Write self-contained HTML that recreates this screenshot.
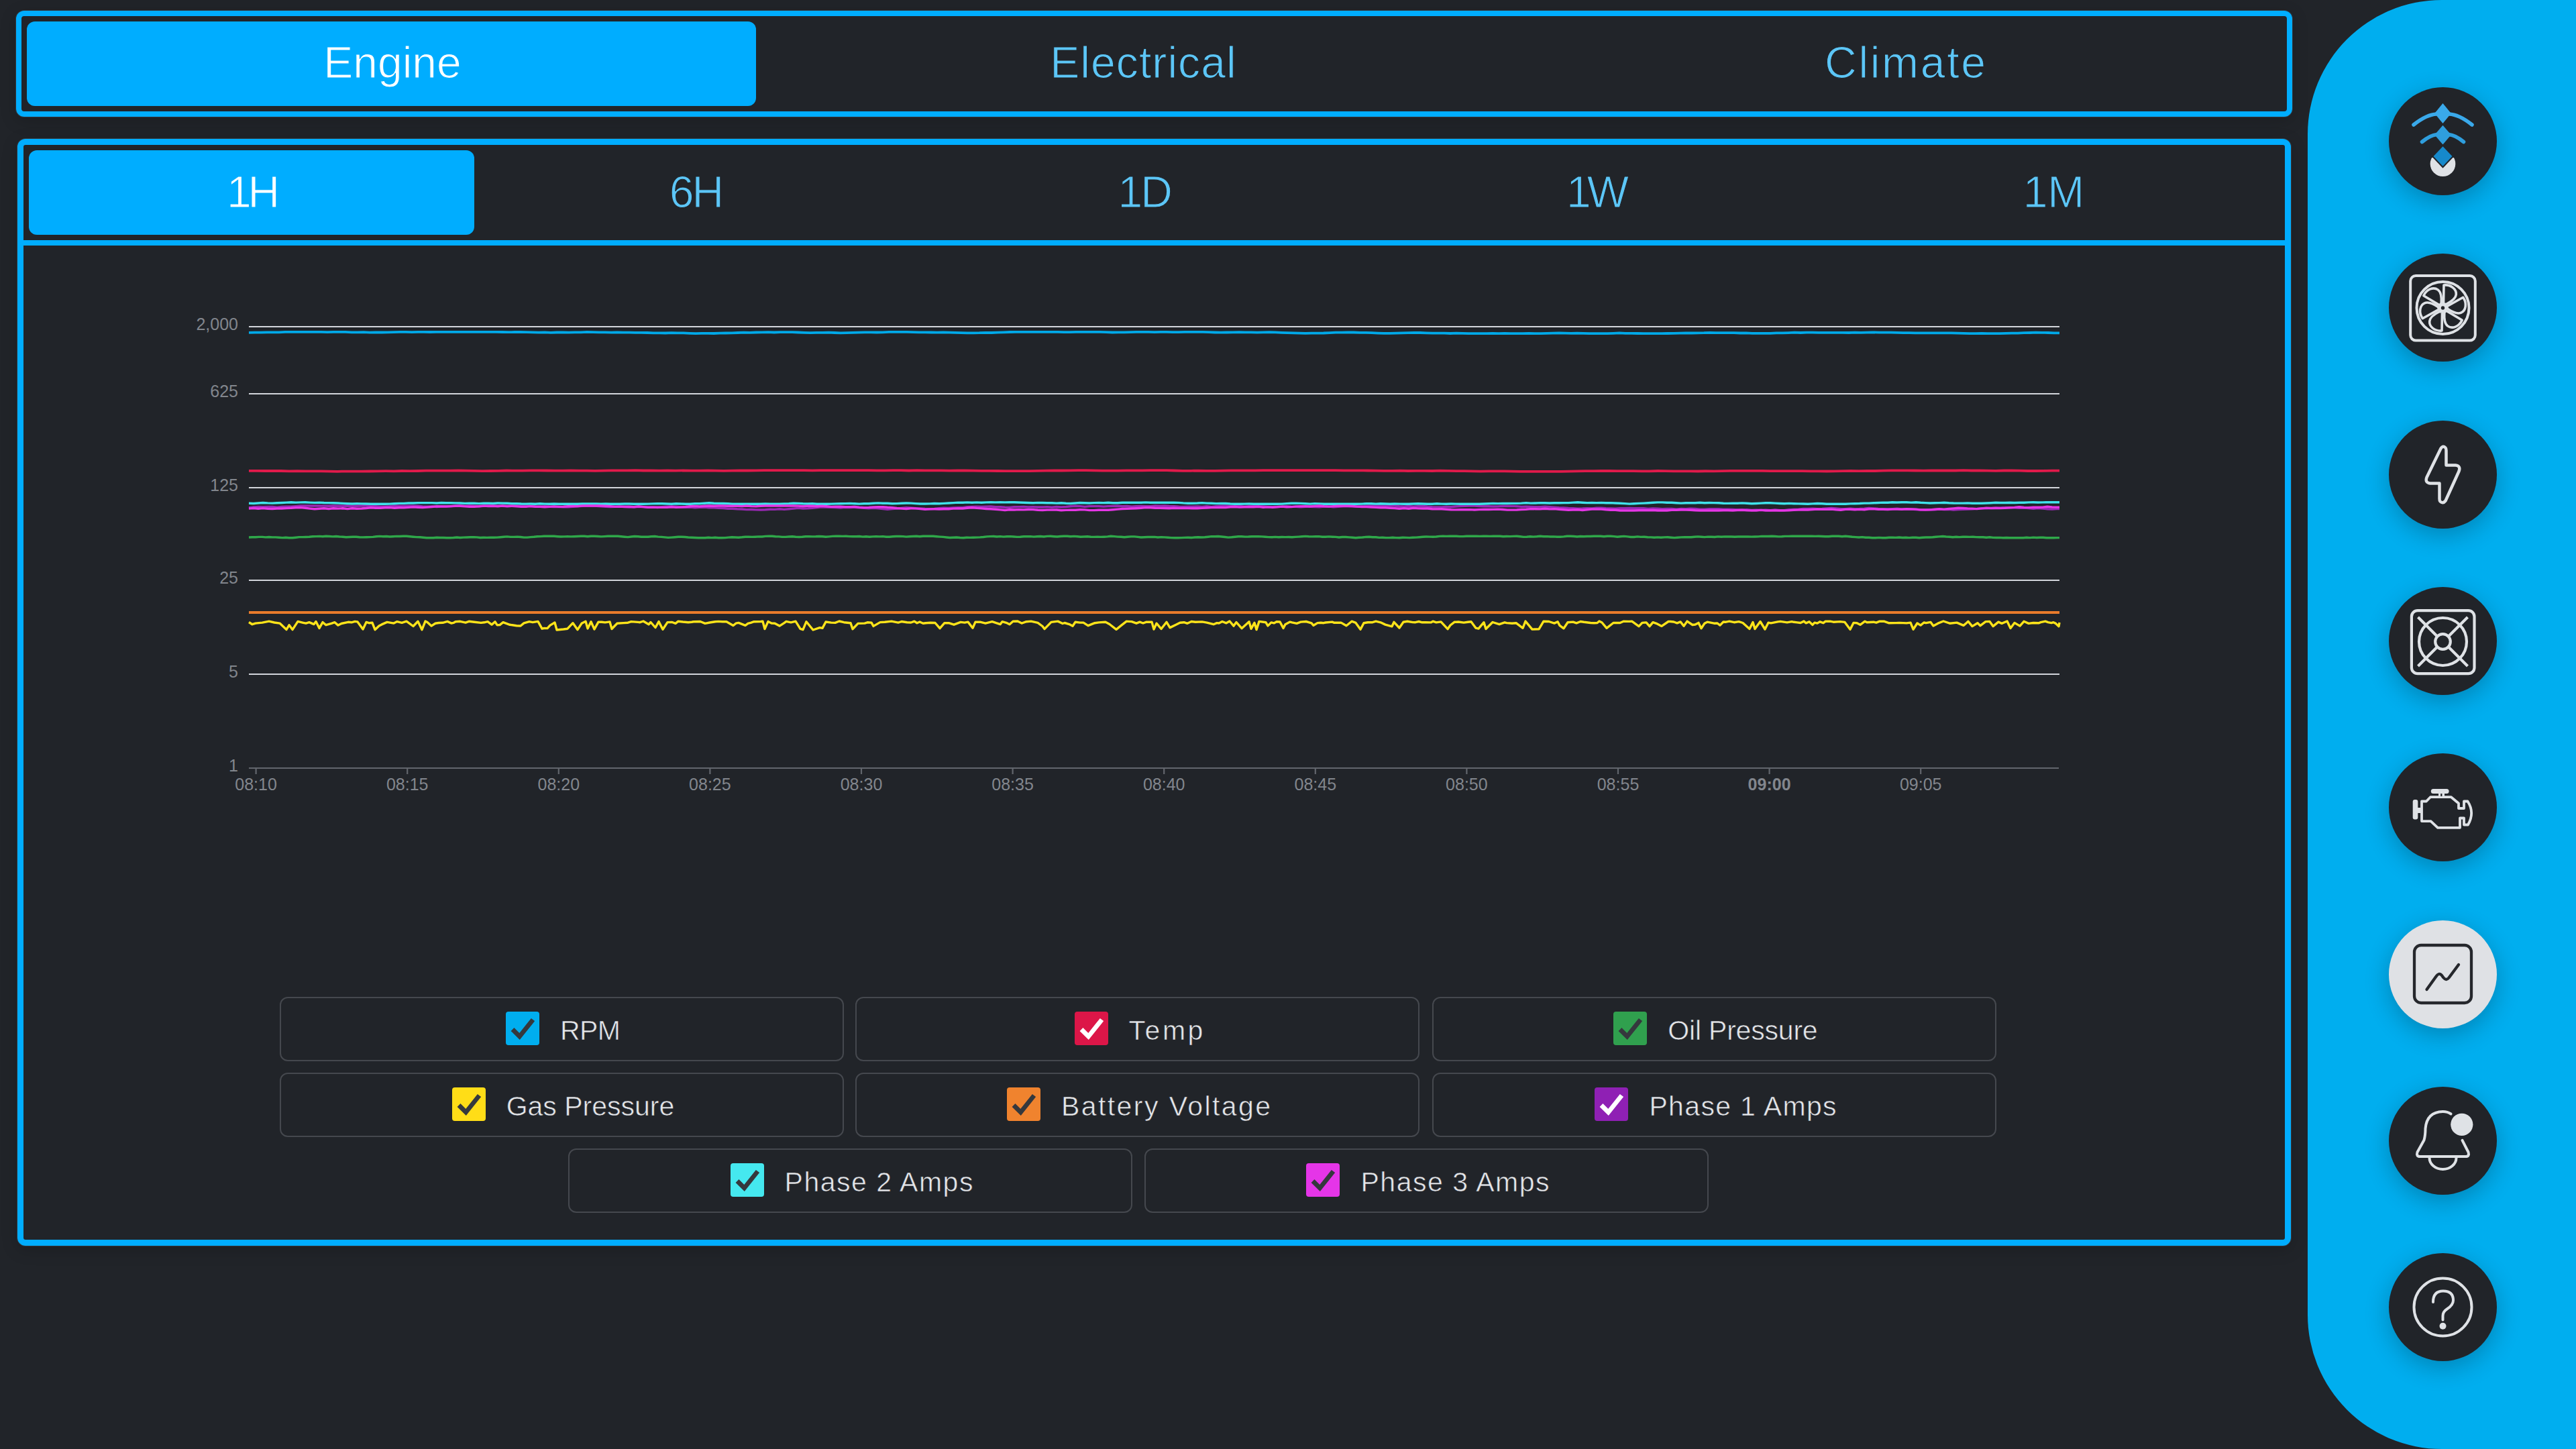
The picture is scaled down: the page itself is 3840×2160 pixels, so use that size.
<!DOCTYPE html>
<html><head><meta charset="utf-8">
<style>
html,body{margin:0;padding:0;}
body{width:3840px;height:2160px;background:#212429;position:relative;overflow:hidden;font-family:"Liberation Sans",sans-serif;}
.box{position:absolute;box-sizing:border-box;border:8px solid #00ADFF;border-radius:12px;box-shadow:0 0 0 1px rgba(70,72,78,0.55),0 6px 24px rgba(0,0,0,0.18);}
.btn{position:absolute;background:#00ADFF;border-radius:12px;}
.tt{position:absolute;font-size:66px;line-height:66px;color:#5CC6F7;-webkit-text-stroke:1.1px #212429;white-space:nowrap;text-align:center;width:600px;}
.tt.on{color:#FFFFFF;-webkit-text-stroke:1.1px #00ADFF;}
.yl{position:absolute;right:3485px;font-size:25px;line-height:30px;color:#82868D;white-space:nowrap;text-align:right;}
.xl{position:absolute;top:1154px;width:120px;text-align:center;font-size:25px;line-height:30px;color:#82868D;}
.lg{position:absolute;box-sizing:border-box;width:841px;height:96px;border:2px solid #45484E;border-radius:12px;display:flex;align-items:center;justify-content:center;padding-left:4px;}
.cb{display:inline-block;width:50px;height:50px;border-radius:4px;margin-right:31px;position:relative;top:-1.5px;}
.cb svg{position:absolute;left:0;top:0;}
.lt{position:relative;top:2px;font-size:41px;line-height:41px;color:#E4E6E9;-webkit-text-stroke:0.6px #212429;white-space:nowrap;}
.side{position:absolute;left:3440px;top:0;width:400px;height:2160px;background:#00AEEF;border-radius:200px 0 0 200px;}
.cir{position:absolute;left:121.3px;width:161px;height:161px;border-radius:50%;box-shadow:0 10px 36px rgba(0,0,0,0.24);}
.cir svg{position:absolute;left:0;top:0;}
</style></head><body>
<div class="box" style="left:24px;top:16px;width:3393px;height:158px;"></div>
<div class="btn" style="left:40px;top:32px;width:1087px;height:126px;"></div>
<div class="tt on" style="left:285px;top:60px">Engine</div>
<div class="tt" style="left:1404.5px;top:60px;letter-spacing:1.07px">Electrical</div>
<div class="tt" style="left:2541.35px;top:60px;letter-spacing:2.7px">Climate</div>

<div class="box" style="left:26px;top:207px;width:3389px;height:1650px;border-width:9px;"></div>
<div class="btn" style="left:43px;top:224px;width:664px;height:126px;"></div>
<div style="position:absolute;left:35px;top:358px;width:3371px;height:8px;background:#00ADFF"></div>
<div class="tt on" style="left:75.10000000000002px;top:252.5px;letter-spacing:-5px">1H</div>
<div class="tt" style="left:736.9000000000001px;top:252.5px;letter-spacing:-3px">6H</div>
<div class="tt" style="left:1405.8px;top:252.5px;letter-spacing:-3px">1D</div>
<div class="tt" style="left:2078.5px;top:252.5px;letter-spacing:-6px">1W</div>
<div class="tt" style="left:2761.5px;top:252.5px">1M</div>

<svg style="position:absolute;left:0;top:0" width="3400" height="1200" viewBox="0 0 3400 1200">
<line x1="371" y1="487" x2="3070" y2="487" stroke="#D2D5DB" stroke-width="2.2"/>
<line x1="371" y1="587" x2="3070" y2="587" stroke="#D2D5DB" stroke-width="2.2"/>
<line x1="371" y1="727" x2="3070" y2="727" stroke="#D2D5DB" stroke-width="2.2"/>
<line x1="371" y1="865" x2="3070" y2="865" stroke="#D2D5DB" stroke-width="2.2"/>
<line x1="371" y1="1005" x2="3070" y2="1005" stroke="#D2D5DB" stroke-width="2.2"/>
<line x1="371" y1="1145" x2="3069" y2="1145" stroke="#62666D" stroke-width="2.2"/>
<line x1="381.6" y1="1145" x2="381.6" y2="1154" stroke="#62666D" stroke-width="2.2"/>
<line x1="607.2" y1="1145" x2="607.2" y2="1154" stroke="#62666D" stroke-width="2.2"/>
<line x1="832.8" y1="1145" x2="832.8" y2="1154" stroke="#62666D" stroke-width="2.2"/>
<line x1="1058.4" y1="1145" x2="1058.4" y2="1154" stroke="#62666D" stroke-width="2.2"/>
<line x1="1284.0" y1="1145" x2="1284.0" y2="1154" stroke="#62666D" stroke-width="2.2"/>
<line x1="1509.6" y1="1145" x2="1509.6" y2="1154" stroke="#62666D" stroke-width="2.2"/>
<line x1="1735.2" y1="1145" x2="1735.2" y2="1154" stroke="#62666D" stroke-width="2.2"/>
<line x1="1960.8" y1="1145" x2="1960.8" y2="1154" stroke="#62666D" stroke-width="2.2"/>
<line x1="2186.4" y1="1145" x2="2186.4" y2="1154" stroke="#62666D" stroke-width="2.2"/>
<line x1="2412.0" y1="1145" x2="2412.0" y2="1154" stroke="#62666D" stroke-width="2.2"/>
<line x1="2637.6" y1="1145" x2="2637.6" y2="1154" stroke="#62666D" stroke-width="2.2"/>
<line x1="2863.2" y1="1145" x2="2863.2" y2="1154" stroke="#62666D" stroke-width="2.2"/>
<path d="M371.0,495.9 L380.0,495.6 L389.0,495.7 L398.0,495.4 L407.0,495.4 L416.0,495.3 L425.0,494.9 L434.0,494.9 L443.0,494.8 L452.0,494.8 L461.0,494.8 L470.0,494.8 L479.0,494.8 L488.0,495.1 L497.0,494.8 L506.0,494.8 L515.0,494.9 L524.0,495.3 L533.0,495.3 L542.0,495.2 L551.0,495.6 L560.0,495.3 L569.0,495.5 L578.0,495.4 L587.0,495.1 L596.0,494.8 L605.0,494.8 L614.0,495.1 L623.0,494.8 L632.0,494.9 L641.0,495.0 L650.0,494.9 L659.0,494.9 L668.0,494.8 L677.0,494.8 L686.0,494.8 L695.0,494.9 L704.0,494.9 L713.0,494.8 L722.0,494.9 L731.0,494.8 L740.0,494.8 L749.0,495.0 L758.0,495.2 L767.0,495.0 L776.0,495.0 L785.0,495.1 L794.0,495.4 L803.0,495.6 L812.0,495.4 L821.0,495.8 L830.0,495.5 L839.0,495.4 L848.0,495.6 L857.0,495.3 L866.0,495.3 L875.0,494.9 L884.0,495.1 L893.0,495.3 L902.0,495.4 L911.0,495.7 L920.0,495.5 L929.0,495.7 L938.0,495.7 L947.0,495.8 L956.0,495.8 L965.0,496.0 L974.0,496.4 L983.0,496.4 L992.0,496.5 L1001.0,496.2 L1010.0,496.3 L1019.0,496.4 L1028.0,496.8 L1037.0,497.1 L1046.0,496.9 L1055.0,496.8 L1064.0,497.0 L1073.0,496.6 L1082.0,496.5 L1091.0,496.3 L1100.0,496.0 L1109.0,495.6 L1118.0,495.8 L1127.0,495.5 L1136.0,495.3 L1145.0,495.2 L1154.0,495.5 L1163.0,495.2 L1172.0,495.2 L1181.0,495.2 L1190.0,495.5 L1199.0,495.8 L1208.0,496.1 L1217.0,495.9 L1226.0,495.8 L1235.0,495.7 L1244.0,496.0 L1253.0,496.4 L1262.0,496.1 L1271.0,495.8 L1280.0,495.6 L1289.0,495.4 L1298.0,495.4 L1307.0,495.5 L1316.0,495.3 L1325.0,494.9 L1334.0,494.8 L1343.0,494.8 L1352.0,494.9 L1361.0,495.2 L1370.0,495.4 L1379.0,495.4 L1388.0,495.5 L1397.0,495.6 L1406.0,495.3 L1415.0,495.6 L1424.0,495.8 L1433.0,496.1 L1442.0,496.3 L1451.0,496.3 L1460.0,496.2 L1469.0,495.9 L1478.0,496.0 L1487.0,495.6 L1496.0,495.3 L1505.0,495.0 L1514.0,494.8 L1523.0,494.8 L1532.0,494.8 L1541.0,494.8 L1550.0,494.8 L1559.0,494.8 L1568.0,494.8 L1577.0,494.8 L1586.0,495.1 L1595.0,495.2 L1604.0,494.9 L1613.0,494.8 L1622.0,494.8 L1631.0,494.8 L1640.0,494.8 L1649.0,495.1 L1658.0,495.5 L1667.0,495.4 L1676.0,495.4 L1685.0,495.1 L1694.0,494.8 L1703.0,494.8 L1712.0,494.8 L1721.0,495.1 L1730.0,494.8 L1739.0,494.8 L1748.0,495.2 L1757.0,495.2 L1766.0,494.9 L1775.0,494.9 L1784.0,494.8 L1793.0,494.8 L1802.0,495.2 L1811.0,495.5 L1820.0,495.7 L1829.0,495.5 L1838.0,495.4 L1847.0,495.1 L1856.0,495.3 L1865.0,495.3 L1874.0,495.6 L1883.0,495.4 L1892.0,495.2 L1901.0,495.4 L1910.0,495.8 L1919.0,496.1 L1928.0,496.4 L1937.0,496.6 L1946.0,496.8 L1955.0,496.6 L1964.0,496.6 L1973.0,496.5 L1982.0,496.1 L1991.0,495.7 L2000.0,495.6 L2009.0,495.4 L2018.0,495.5 L2027.0,495.9 L2036.0,495.8 L2045.0,496.2 L2054.0,496.6 L2063.0,496.9 L2072.0,496.8 L2081.0,496.6 L2090.0,496.4 L2099.0,496.2 L2108.0,495.9 L2117.0,496.0 L2126.0,496.3 L2135.0,496.6 L2144.0,496.6 L2153.0,496.7 L2162.0,497.0 L2171.0,496.6 L2180.0,496.8 L2189.0,497.1 L2198.0,497.2 L2207.0,497.2 L2216.0,497.2 L2225.0,496.9 L2234.0,497.2 L2243.0,497.0 L2252.0,497.2 L2261.0,497.2 L2270.0,497.1 L2279.0,497.0 L2288.0,497.2 L2297.0,497.2 L2306.0,496.9 L2315.0,496.6 L2324.0,496.4 L2333.0,496.7 L2342.0,496.9 L2351.0,496.6 L2360.0,496.9 L2369.0,497.2 L2378.0,497.2 L2387.0,497.1 L2396.0,497.1 L2405.0,496.8 L2414.0,496.4 L2423.0,496.8 L2432.0,496.9 L2441.0,497.0 L2450.0,497.2 L2459.0,497.1 L2468.0,497.2 L2477.0,497.2 L2486.0,497.0 L2495.0,496.8 L2504.0,496.6 L2513.0,496.4 L2522.0,496.5 L2531.0,496.3 L2540.0,496.2 L2549.0,495.9 L2558.0,496.2 L2567.0,496.1 L2576.0,496.1 L2585.0,496.2 L2594.0,496.5 L2603.0,496.4 L2612.0,496.8 L2621.0,496.8 L2630.0,496.8 L2639.0,496.8 L2648.0,496.4 L2657.0,496.4 L2666.0,496.1 L2675.0,495.7 L2684.0,496.0 L2693.0,495.7 L2702.0,495.7 L2711.0,495.9 L2720.0,495.9 L2729.0,495.8 L2738.0,495.8 L2747.0,495.8 L2756.0,496.0 L2765.0,495.7 L2774.0,495.8 L2783.0,495.6 L2792.0,495.4 L2801.0,495.6 L2810.0,495.6 L2819.0,495.7 L2828.0,495.9 L2837.0,496.2 L2846.0,496.2 L2855.0,496.3 L2864.0,496.3 L2873.0,496.3 L2882.0,496.4 L2891.0,496.4 L2900.0,496.4 L2909.0,496.4 L2918.0,496.7 L2927.0,496.9 L2936.0,497.2 L2945.0,497.2 L2954.0,497.0 L2963.0,497.1 L2972.0,497.2 L2981.0,497.2 L2990.0,496.9 L2999.0,496.6 L3008.0,496.6 L3017.0,496.2 L3026.0,496.0 L3035.0,495.7 L3044.0,495.8 L3053.0,496.0 L3062.0,496.4 L3070.0,496.4" fill="none" stroke="#00A9E8" stroke-width="3.8" stroke-linejoin="round" stroke-linecap="butt"/>
<path d="M371.0,701.8 L383.0,701.9 L395.0,702.0 L407.0,701.8 L419.0,702.0 L431.0,702.3 L443.0,702.1 L455.0,702.4 L467.0,702.4 L479.0,702.3 L491.0,702.6 L503.0,702.8 L515.0,702.6 L527.0,702.6 L539.0,702.6 L551.0,702.5 L563.0,702.3 L575.0,702.2 L587.0,702.3 L599.0,702.0 L611.0,702.1 L623.0,702.0 L635.0,701.7 L647.0,701.6 L659.0,701.7 L671.0,701.7 L683.0,701.4 L695.0,701.7 L707.0,701.9 L719.0,702.2 L731.0,702.0 L743.0,701.8 L755.0,701.5 L767.0,701.7 L779.0,701.6 L791.0,701.3 L803.0,701.3 L815.0,701.5 L827.0,701.7 L839.0,701.6 L851.0,701.4 L863.0,701.6 L875.0,701.7 L887.0,701.8 L899.0,701.6 L911.0,701.3 L923.0,701.4 L935.0,701.4 L947.0,701.2 L959.0,701.5 L971.0,701.5 L983.0,701.7 L995.0,701.5 L1007.0,701.7 L1019.0,701.4 L1031.0,701.6 L1043.0,701.6 L1055.0,701.5 L1067.0,701.6 L1079.0,701.8 L1091.0,701.7 L1103.0,701.4 L1115.0,701.5 L1127.0,701.3 L1139.0,701.2 L1151.0,701.2 L1163.0,701.2 L1175.0,701.2 L1187.0,701.2 L1199.0,701.2 L1211.0,701.4 L1223.0,701.2 L1235.0,701.2 L1247.0,701.2 L1259.0,701.2 L1271.0,701.2 L1283.0,701.2 L1295.0,701.2 L1307.0,701.3 L1319.0,701.4 L1331.0,701.2 L1343.0,701.2 L1355.0,701.5 L1367.0,701.2 L1379.0,701.4 L1391.0,701.4 L1403.0,701.4 L1415.0,701.6 L1427.0,701.5 L1439.0,701.5 L1451.0,701.6 L1463.0,701.9 L1475.0,701.8 L1487.0,702.0 L1499.0,702.1 L1511.0,702.2 L1523.0,702.2 L1535.0,702.1 L1547.0,701.8 L1559.0,701.6 L1571.0,701.3 L1583.0,701.5 L1595.0,701.3 L1607.0,701.2 L1619.0,701.2 L1631.0,701.4 L1643.0,701.6 L1655.0,701.7 L1667.0,701.6 L1679.0,701.4 L1691.0,701.3 L1703.0,701.3 L1715.0,701.2 L1727.0,701.2 L1739.0,701.2 L1751.0,701.5 L1763.0,701.8 L1775.0,701.8 L1787.0,701.6 L1799.0,701.9 L1811.0,701.8 L1823.0,701.7 L1835.0,701.4 L1847.0,701.3 L1859.0,701.3 L1871.0,701.3 L1883.0,701.2 L1895.0,701.2 L1907.0,701.2 L1919.0,701.2 L1931.0,701.2 L1943.0,701.2 L1955.0,701.2 L1967.0,701.2 L1979.0,701.2 L1991.0,701.2 L2003.0,701.3 L2015.0,701.3 L2027.0,701.4 L2039.0,701.5 L2051.0,701.6 L2063.0,701.9 L2075.0,701.8 L2087.0,701.7 L2099.0,702.0 L2111.0,701.8 L2123.0,701.9 L2135.0,702.0 L2147.0,701.7 L2159.0,701.9 L2171.0,702.2 L2183.0,702.2 L2195.0,702.4 L2207.0,702.6 L2219.0,702.4 L2231.0,702.4 L2243.0,702.4 L2255.0,702.6 L2267.0,702.8 L2279.0,702.8 L2291.0,702.8 L2303.0,702.8 L2315.0,702.8 L2327.0,702.8 L2339.0,702.6 L2351.0,702.4 L2363.0,702.1 L2375.0,702.1 L2387.0,701.8 L2399.0,702.0 L2411.0,702.1 L2423.0,702.1 L2435.0,702.2 L2447.0,702.3 L2459.0,702.3 L2471.0,702.0 L2483.0,702.2 L2495.0,702.3 L2507.0,702.3 L2519.0,702.4 L2531.0,702.5 L2543.0,702.2 L2555.0,702.3 L2567.0,702.2 L2579.0,701.9 L2591.0,701.8 L2603.0,701.9 L2615.0,701.8 L2627.0,701.9 L2639.0,702.2 L2651.0,702.2 L2663.0,702.1 L2675.0,702.1 L2687.0,702.2 L2699.0,702.4 L2711.0,702.4 L2723.0,702.5 L2735.0,702.3 L2747.0,702.1 L2759.0,701.9 L2771.0,702.1 L2783.0,701.9 L2795.0,702.0 L2807.0,701.7 L2819.0,701.4 L2831.0,701.3 L2843.0,701.4 L2855.0,701.5 L2867.0,701.6 L2879.0,701.5 L2891.0,701.5 L2903.0,701.5 L2915.0,701.5 L2927.0,701.2 L2939.0,701.5 L2951.0,701.3 L2963.0,701.6 L2975.0,701.8 L2987.0,701.5 L2999.0,701.5 L3011.0,701.7 L3023.0,702.0 L3035.0,702.0 L3047.0,701.8 L3059.0,701.6 L3070.0,701.6" fill="none" stroke="#E11A4B" stroke-width="3.8" stroke-linejoin="round" stroke-linecap="butt"/>
<path d="M371.0,801.0 L376.0,800.7 L381.0,800.8 L386.0,800.4 L391.0,800.4 L396.0,800.9 L401.0,800.5 L406.0,800.9 L411.0,800.9 L416.0,801.3 L421.0,801.6 L426.0,801.3 L431.0,801.7 L436.0,801.7 L441.0,801.2 L446.0,800.6 L451.0,800.6 L456.0,800.5 L461.0,800.3 L466.0,799.8 L471.0,799.6 L476.0,799.4 L481.0,799.8 L486.0,799.2 L491.0,799.5 L496.0,799.9 L501.0,799.5 L506.0,800.0 L511.0,800.2 L516.0,800.7 L521.0,800.5 L526.0,800.3 L531.0,800.2 L536.0,800.8 L541.0,800.9 L546.0,800.7 L551.0,800.6 L556.0,800.4 L561.0,799.8 L566.0,799.4 L571.0,799.8 L576.0,799.5 L581.0,800.0 L586.0,799.7 L591.0,799.4 L596.0,799.5 L601.0,799.2 L606.0,799.2 L611.0,799.7 L616.0,800.2 L621.0,800.6 L626.0,800.7 L631.0,801.2 L636.0,801.8 L641.0,801.8 L646.0,801.8 L651.0,801.3 L656.0,801.5 L661.0,801.5 L666.0,801.8 L671.0,801.8 L676.0,801.5 L681.0,801.0 L686.0,801.5 L691.0,801.1 L696.0,801.0 L701.0,800.8 L706.0,800.6 L711.0,800.9 L716.0,801.5 L721.0,801.2 L726.0,801.4 L731.0,801.1 L736.0,801.2 L741.0,801.1 L746.0,800.7 L751.0,800.3 L756.0,799.9 L761.0,800.4 L766.0,800.4 L771.0,800.1 L776.0,800.5 L781.0,801.1 L786.0,801.1 L791.0,800.6 L796.0,800.3 L801.0,799.8 L806.0,799.6 L811.0,799.2 L816.0,799.2 L821.0,799.2 L826.0,799.3 L831.0,799.7 L836.0,800.0 L841.0,799.9 L846.0,799.8 L851.0,799.9 L856.0,799.7 L861.0,799.5 L866.0,799.2 L871.0,799.2 L876.0,799.8 L881.0,799.3 L886.0,799.3 L891.0,799.5 L896.0,799.9 L901.0,799.6 L906.0,799.3 L911.0,799.2 L916.0,799.2 L921.0,799.2 L926.0,799.7 L931.0,800.2 L936.0,800.6 L941.0,800.0 L946.0,799.5 L951.0,799.7 L956.0,800.2 L961.0,800.2 L966.0,800.3 L971.0,799.7 L976.0,799.5 L981.0,800.1 L986.0,800.4 L991.0,800.9 L996.0,801.4 L1001.0,801.1 L1006.0,800.7 L1011.0,800.3 L1016.0,800.3 L1021.0,800.5 L1026.0,801.0 L1031.0,801.3 L1036.0,801.5 L1041.0,801.8 L1046.0,801.7 L1051.0,801.8 L1056.0,801.2 L1061.0,801.6 L1066.0,801.3 L1071.0,801.8 L1076.0,801.8 L1081.0,801.6 L1086.0,801.1 L1091.0,800.8 L1096.0,801.0 L1101.0,801.2 L1106.0,800.8 L1111.0,800.2 L1116.0,800.3 L1121.0,800.4 L1126.0,800.2 L1131.0,799.9 L1136.0,800.0 L1141.0,799.4 L1146.0,799.2 L1151.0,799.2 L1156.0,799.8 L1161.0,799.9 L1166.0,800.4 L1171.0,800.4 L1176.0,800.0 L1181.0,799.7 L1186.0,800.3 L1191.0,800.5 L1196.0,800.3 L1201.0,799.7 L1206.0,799.7 L1211.0,799.9 L1216.0,799.8 L1221.0,799.5 L1226.0,799.7 L1231.0,800.3 L1236.0,799.9 L1241.0,799.4 L1246.0,799.2 L1251.0,799.2 L1256.0,799.4 L1261.0,799.2 L1266.0,799.6 L1271.0,799.8 L1276.0,799.8 L1281.0,799.5 L1286.0,800.1 L1291.0,799.8 L1296.0,800.2 L1301.0,799.9 L1306.0,799.6 L1311.0,799.9 L1316.0,799.6 L1321.0,800.2 L1326.0,800.2 L1331.0,799.8 L1336.0,799.5 L1341.0,799.4 L1346.0,799.6 L1351.0,800.1 L1356.0,799.7 L1361.0,799.5 L1366.0,799.2 L1371.0,799.8 L1376.0,799.3 L1381.0,799.2 L1386.0,799.2 L1391.0,799.2 L1396.0,799.7 L1401.0,800.1 L1406.0,800.4 L1411.0,801.0 L1416.0,801.5 L1421.0,801.3 L1426.0,801.0 L1431.0,801.5 L1436.0,801.8 L1441.0,801.2 L1446.0,801.4 L1451.0,801.3 L1456.0,801.1 L1461.0,800.9 L1466.0,800.5 L1471.0,799.9 L1476.0,799.6 L1481.0,799.5 L1486.0,800.0 L1491.0,799.6 L1496.0,800.1 L1501.0,799.8 L1506.0,799.6 L1511.0,800.0 L1516.0,800.4 L1521.0,800.3 L1526.0,799.7 L1531.0,799.7 L1536.0,799.6 L1541.0,800.1 L1546.0,799.7 L1551.0,799.5 L1556.0,800.0 L1561.0,799.4 L1566.0,799.3 L1571.0,799.7 L1576.0,800.0 L1581.0,799.5 L1586.0,799.2 L1591.0,799.2 L1596.0,799.7 L1601.0,799.4 L1606.0,799.7 L1611.0,800.2 L1616.0,800.0 L1621.0,799.7 L1626.0,800.3 L1631.0,800.4 L1636.0,800.1 L1641.0,800.4 L1646.0,800.2 L1651.0,799.9 L1656.0,799.3 L1661.0,799.6 L1666.0,800.1 L1671.0,800.3 L1676.0,800.8 L1681.0,800.2 L1686.0,799.9 L1691.0,799.9 L1696.0,800.4 L1701.0,801.0 L1706.0,800.8 L1711.0,800.5 L1716.0,800.5 L1721.0,800.4 L1726.0,801.0 L1731.0,800.6 L1736.0,800.9 L1741.0,801.2 L1746.0,801.6 L1751.0,801.8 L1756.0,801.8 L1761.0,801.6 L1766.0,801.4 L1771.0,801.2 L1776.0,801.5 L1781.0,801.0 L1786.0,800.7 L1791.0,801.0 L1796.0,800.7 L1801.0,800.2 L1806.0,799.6 L1811.0,799.7 L1816.0,799.5 L1821.0,800.0 L1826.0,800.5 L1831.0,801.1 L1836.0,800.8 L1841.0,800.3 L1846.0,799.8 L1851.0,799.8 L1856.0,800.1 L1861.0,800.0 L1866.0,799.7 L1871.0,799.6 L1876.0,799.7 L1881.0,799.9 L1886.0,800.2 L1891.0,800.6 L1896.0,800.8 L1901.0,800.4 L1906.0,800.8 L1911.0,800.5 L1916.0,800.6 L1921.0,800.5 L1926.0,800.8 L1931.0,800.4 L1936.0,800.1 L1941.0,799.8 L1946.0,799.4 L1951.0,799.8 L1956.0,799.9 L1961.0,799.7 L1966.0,799.6 L1971.0,800.2 L1976.0,800.2 L1981.0,799.9 L1986.0,800.2 L1991.0,800.4 L1996.0,801.0 L2001.0,800.5 L2006.0,800.5 L2011.0,800.9 L2016.0,801.3 L2021.0,801.8 L2026.0,801.2 L2031.0,801.0 L2036.0,800.5 L2041.0,800.2 L2046.0,800.7 L2051.0,800.8 L2056.0,801.4 L2061.0,801.2 L2066.0,801.6 L2071.0,801.6 L2076.0,801.3 L2081.0,801.6 L2086.0,801.8 L2091.0,801.3 L2096.0,801.4 L2101.0,801.6 L2106.0,801.2 L2111.0,801.1 L2116.0,800.7 L2121.0,800.3 L2126.0,800.0 L2131.0,800.1 L2136.0,800.3 L2141.0,800.0 L2146.0,799.4 L2151.0,799.2 L2156.0,799.4 L2161.0,799.2 L2166.0,799.2 L2171.0,799.2 L2176.0,799.6 L2181.0,799.6 L2186.0,799.2 L2191.0,799.2 L2196.0,799.2 L2201.0,799.3 L2206.0,799.4 L2211.0,799.2 L2216.0,799.2 L2221.0,799.4 L2226.0,799.3 L2231.0,799.2 L2236.0,799.2 L2241.0,799.7 L2246.0,799.5 L2251.0,799.6 L2256.0,799.4 L2261.0,799.3 L2266.0,799.8 L2271.0,800.4 L2276.0,800.2 L2281.0,799.8 L2286.0,800.1 L2291.0,799.8 L2296.0,799.2 L2301.0,799.7 L2306.0,799.6 L2311.0,800.0 L2316.0,799.9 L2321.0,800.3 L2326.0,800.3 L2331.0,799.9 L2336.0,799.3 L2341.0,799.3 L2346.0,799.5 L2351.0,800.0 L2356.0,799.5 L2361.0,799.7 L2366.0,799.5 L2371.0,799.5 L2376.0,799.2 L2381.0,799.2 L2386.0,799.2 L2391.0,799.7 L2396.0,799.3 L2401.0,799.3 L2406.0,799.6 L2411.0,800.2 L2416.0,799.8 L2421.0,799.4 L2426.0,799.9 L2431.0,800.5 L2436.0,800.5 L2441.0,799.9 L2446.0,800.4 L2451.0,800.3 L2456.0,800.8 L2461.0,800.9 L2466.0,801.3 L2471.0,800.9 L2476.0,801.2 L2481.0,800.9 L2486.0,800.8 L2491.0,801.2 L2496.0,801.6 L2501.0,801.2 L2506.0,800.9 L2511.0,800.8 L2516.0,800.8 L2521.0,800.7 L2526.0,800.2 L2531.0,799.9 L2536.0,800.2 L2541.0,800.6 L2546.0,800.1 L2551.0,800.2 L2556.0,800.5 L2561.0,799.9 L2566.0,800.3 L2571.0,799.9 L2576.0,800.0 L2581.0,800.0 L2586.0,800.2 L2591.0,800.0 L2596.0,799.9 L2601.0,800.0 L2606.0,799.9 L2611.0,800.1 L2616.0,800.0 L2621.0,799.9 L2626.0,799.4 L2631.0,799.5 L2636.0,799.5 L2641.0,799.2 L2646.0,799.5 L2651.0,799.9 L2656.0,799.8 L2661.0,799.4 L2666.0,799.4 L2671.0,799.2 L2676.0,799.2 L2681.0,799.2 L2686.0,799.2 L2691.0,799.2 L2696.0,799.2 L2701.0,799.2 L2706.0,799.4 L2711.0,799.2 L2716.0,799.5 L2721.0,799.8 L2726.0,799.8 L2731.0,799.3 L2736.0,799.3 L2741.0,799.2 L2746.0,799.7 L2751.0,799.3 L2756.0,799.7 L2761.0,800.3 L2766.0,800.6 L2771.0,801.0 L2776.0,800.6 L2781.0,801.2 L2786.0,801.2 L2791.0,801.7 L2796.0,801.8 L2801.0,801.4 L2806.0,801.7 L2811.0,801.8 L2816.0,801.3 L2821.0,801.1 L2826.0,801.4 L2831.0,801.0 L2836.0,801.5 L2841.0,801.2 L2846.0,801.6 L2851.0,801.2 L2856.0,801.2 L2861.0,801.7 L2866.0,801.3 L2871.0,801.0 L2876.0,801.0 L2881.0,800.8 L2886.0,800.3 L2891.0,799.9 L2896.0,799.5 L2901.0,800.0 L2906.0,800.2 L2911.0,800.7 L2916.0,800.3 L2921.0,800.6 L2926.0,800.2 L2931.0,800.2 L2936.0,800.4 L2941.0,800.2 L2946.0,800.6 L2951.0,800.7 L2956.0,800.8 L2961.0,801.3 L2966.0,800.8 L2971.0,801.4 L2976.0,801.5 L2981.0,801.4 L2986.0,801.8 L2991.0,801.5 L2996.0,801.8 L3001.0,801.8 L3006.0,801.6 L3011.0,801.8 L3016.0,801.7 L3021.0,801.3 L3026.0,801.6 L3031.0,801.1 L3036.0,801.5 L3041.0,801.2 L3046.0,801.3 L3051.0,801.8 L3056.0,801.8 L3061.0,801.8 L3066.0,801.6 L3070.0,801.6" fill="none" stroke="#2FA84A" stroke-width="3.4" stroke-linejoin="round" stroke-linecap="butt"/>
<path d="M371.0,927.5 L376.0,930.7 L381.0,929.1 L391.0,928.1 L401.0,926.2 L409.0,928.0 L417.0,929.1 L427.0,938.5 L431.0,931.8 L436.0,938.6 L444.0,926.4 L452.0,928.3 L456.0,929.2 L461.0,927.6 L468.0,930.6 L471.0,926.5 L476.0,936.4 L481.0,927.6 L486.0,931.7 L494.0,929.4 L499.0,927.7 L504.0,932.1 L509.0,929.5 L519.0,927.3 L524.0,927.8 L529.0,926.4 L533.0,926.9 L541.0,938.0 L546.0,927.4 L550.0,928.7 L555.0,928.3 L559.0,938.7 L565.0,933.0 L569.0,930.9 L577.0,927.4 L587.0,929.1 L592.0,926.6 L599.0,928.3 L606.0,926.1 L616.0,933.5 L623.0,926.3 L629.0,938.7 L634.0,926.1 L637.0,927.5 L643.0,933.1 L649.0,929.3 L654.0,928.5 L660.0,928.3 L667.0,926.4 L673.0,929.1 L676.0,928.4 L679.0,926.7 L686.0,926.3 L694.0,928.2 L699.0,926.3 L707.0,927.2 L717.0,928.4 L722.0,927.8 L727.0,926.7 L733.0,931.1 L738.0,926.9 L741.0,931.7 L745.0,931.6 L750.0,927.7 L760.0,931.3 L770.0,932.7 L776.0,933.0 L781.0,928.9 L789.0,926.6 L794.0,927.6 L802.0,926.4 L808.0,937.2 L811.0,936.5 L816.0,936.6 L820.0,932.1 L827.0,928.0 L830.0,939.0 L840.0,938.0 L846.0,937.2 L854.0,928.7 L861.0,938.7 L867.0,929.3 L873.0,926.3 L876.0,936.9 L881.0,926.7 L886.0,938.0 L892.0,927.1 L897.0,927.2 L902.0,927.9 L909.0,926.9 L912.0,937.5 L920.0,929.3 L930.0,928.6 L936.0,928.2 L941.0,926.6 L951.0,927.4 L954.0,927.7 L959.0,926.0 L967.0,930.8 L970.0,927.5 L977.0,935.5 L982.0,926.6 L988.0,938.3 L995.0,927.6 L1002.0,927.5 L1007.0,929.4 L1011.0,926.2 L1018.0,927.0 L1026.0,927.7 L1031.0,927.2 L1034.0,926.8 L1044.0,926.5 L1051.0,929.3 L1058.0,928.0 L1066.0,926.8 L1071.0,926.4 L1077.0,926.7 L1083.0,926.8 L1093.0,932.5 L1097.0,929.2 L1101.0,928.4 L1111.0,932.3 L1115.0,929.4 L1119.0,928.4 L1124.0,926.7 L1134.0,926.5 L1137.0,926.2 L1140.0,937.6 L1145.0,926.4 L1150.0,929.1 L1155.0,929.2 L1162.0,933.1 L1169.0,928.6 L1172.0,926.4 L1179.0,927.8 L1186.0,926.2 L1193.0,937.4 L1197.0,938.7 L1202.0,926.7 L1212.0,939.0 L1222.0,935.6 L1226.0,936.4 L1231.0,927.0 L1239.0,928.1 L1245.0,928.4 L1251.0,926.0 L1258.0,927.7 L1268.0,928.8 L1271.0,937.7 L1279.0,929.4 L1289.0,929.1 L1293.0,927.8 L1299.0,928.1 L1302.0,933.4 L1312.0,927.6 L1319.0,927.2 L1329.0,926.1 L1339.0,928.1 L1344.0,926.5 L1352.0,927.8 L1358.0,928.0 L1363.0,926.1 L1367.0,928.7 L1371.0,927.0 L1376.0,929.3 L1380.0,928.7 L1387.0,928.2 L1394.0,928.5 L1401.0,936.7 L1408.0,928.7 L1415.0,928.8 L1422.0,931.2 L1432.0,927.4 L1438.0,928.1 L1443.0,927.1 L1450.0,936.2 L1454.0,927.1 L1461.0,927.2 L1469.0,929.2 L1479.0,926.6 L1485.0,928.7 L1491.0,930.6 L1494.0,926.7 L1500.0,928.3 L1505.0,930.7 L1510.0,926.3 L1517.0,926.0 L1523.0,929.1 L1530.0,926.7 L1537.0,926.1 L1547.0,928.4 L1554.0,933.5 L1557.0,937.6 L1567.0,927.4 L1577.0,926.1 L1584.0,929.5 L1587.0,928.5 L1594.0,930.6 L1599.0,933.2 L1603.0,927.3 L1610.0,928.1 L1615.0,928.1 L1622.0,932.7 L1632.0,928.7 L1638.0,927.9 L1648.0,927.3 L1654.0,930.5 L1664.0,938.3 L1671.0,932.7 L1679.0,926.3 L1682.0,926.4 L1687.0,926.6 L1694.0,929.2 L1699.0,927.2 L1704.0,929.0 L1709.0,927.2 L1717.0,927.1 L1720.0,938.1 L1724.0,929.2 L1731.0,937.5 L1739.0,927.3 L1744.0,935.6 L1752.0,931.7 L1759.0,928.2 L1765.0,927.7 L1770.0,929.3 L1776.0,926.5 L1782.0,927.2 L1792.0,926.9 L1799.0,928.1 L1809.0,930.7 L1814.0,928.6 L1817.0,929.0 L1822.0,926.5 L1828.0,928.8 L1833.0,926.0 L1839.0,933.1 L1843.0,927.6 L1851.0,936.7 L1859.0,929.4 L1862.0,926.7 L1865.0,937.3 L1870.0,928.4 L1873.0,938.6 L1877.0,926.4 L1887.0,927.8 L1890.0,932.9 L1895.0,927.9 L1899.0,928.9 L1903.0,926.8 L1908.0,927.0 L1913.0,936.4 L1916.0,930.7 L1923.0,927.1 L1926.0,927.9 L1933.0,929.4 L1939.0,927.1 L1947.0,926.5 L1955.0,928.8 L1958.0,932.3 L1964.0,928.6 L1969.0,928.3 L1973.0,928.7 L1976.0,928.0 L1986.0,927.1 L1989.0,928.3 L1999.0,928.1 L2007.0,932.7 L2015.0,926.2 L2021.0,928.4 L2028.0,938.3 L2033.0,928.7 L2039.0,927.7 L2046.0,927.7 L2051.0,926.2 L2058.0,927.8 L2065.0,931.1 L2075.0,933.8 L2078.0,927.3 L2086.0,936.0 L2092.0,927.3 L2098.0,926.3 L2106.0,927.6 L2110.0,927.7 L2115.0,926.5 L2120.0,927.8 L2125.0,927.8 L2133.0,927.9 L2136.0,926.2 L2141.0,927.9 L2148.0,926.9 L2158.0,937.7 L2162.0,932.0 L2168.0,927.3 L2171.0,927.3 L2174.0,927.0 L2182.0,928.1 L2188.0,927.3 L2193.0,926.7 L2200.0,936.2 L2204.0,937.1 L2212.0,927.7 L2215.0,937.5 L2225.0,927.5 L2235.0,930.7 L2243.0,927.8 L2246.0,928.6 L2254.0,929.2 L2260.0,928.7 L2270.0,936.3 L2274.0,926.1 L2284.0,938.1 L2294.0,937.9 L2301.0,926.2 L2309.0,926.5 L2317.0,929.1 L2322.0,926.7 L2325.0,932.4 L2331.0,936.8 L2337.0,927.8 L2345.0,927.1 L2350.0,928.8 L2356.0,926.5 L2361.0,927.3 L2371.0,928.5 L2376.0,928.8 L2381.0,928.5 L2384.0,926.0 L2388.0,928.0 L2395.0,936.3 L2405.0,928.5 L2415.0,928.5 L2420.0,926.2 L2428.0,926.4 L2433.0,926.3 L2443.0,933.7 L2448.0,928.4 L2454.0,927.9 L2459.0,933.7 L2464.0,927.6 L2469.0,929.3 L2477.0,933.4 L2487.0,926.5 L2490.0,926.5 L2495.0,927.0 L2500.0,928.8 L2505.0,926.9 L2510.0,933.3 L2515.0,926.1 L2523.0,931.5 L2527.0,931.0 L2532.0,928.4 L2536.0,936.7 L2541.0,929.3 L2545.0,927.2 L2555.0,929.2 L2560.0,929.0 L2564.0,932.1 L2569.0,927.0 L2573.0,927.2 L2578.0,926.2 L2585.0,927.7 L2592.0,926.6 L2598.0,928.5 L2608.0,937.4 L2613.0,927.6 L2616.0,937.5 L2624.0,926.5 L2631.0,938.0 L2636.0,928.3 L2640.0,928.9 L2650.0,926.9 L2654.0,926.4 L2664.0,927.9 L2671.0,926.6 L2674.0,927.3 L2679.0,927.9 L2684.0,928.5 L2689.0,926.1 L2692.0,928.8 L2697.0,926.8 L2702.0,931.4 L2705.0,928.2 L2709.0,929.1 L2713.0,926.8 L2718.0,928.7 L2721.0,926.3 L2728.0,926.1 L2733.0,927.2 L2743.0,926.6 L2750.0,927.4 L2758.0,938.3 L2763.0,928.4 L2768.0,928.7 L2773.0,931.3 L2780.0,926.2 L2783.0,927.7 L2793.0,927.2 L2797.0,928.2 L2802.0,926.2 L2809.0,926.3 L2816.0,928.8 L2826.0,928.6 L2831.0,928.4 L2837.0,928.6 L2842.0,928.9 L2848.0,928.1 L2852.0,938.2 L2858.0,929.0 L2863.0,932.1 L2868.0,928.0 L2871.0,928.7 L2878.0,927.4 L2882.0,932.9 L2889.0,929.2 L2897.0,926.0 L2907.0,929.3 L2917.0,928.1 L2927.0,932.4 L2931.0,929.0 L2934.0,926.3 L2940.0,933.6 L2948.0,928.8 L2952.0,932.7 L2960.0,926.6 L2966.0,926.5 L2971.0,933.6 L2979.0,927.1 L2984.0,929.4 L2992.0,926.0 L2997.0,936.4 L3003.0,928.4 L3011.0,933.1 L3017.0,926.3 L3024.0,929.4 L3031.0,928.5 L3039.0,928.8 L3042.0,927.7 L3049.0,926.1 L3053.0,927.6 L3058.0,928.6 L3061.0,927.7 L3064.0,929.1 L3069.0,933.7 L3070.0,928.0" fill="none" stroke="#FFE41A" stroke-width="3.4" stroke-linejoin="round" stroke-linecap="butt"/>
<path d="M371.0,913.0 L3070.0,913.0" fill="none" stroke="#E97B2B" stroke-width="3.8" stroke-linejoin="round" stroke-linecap="butt"/>
<path d="M371.0,756.7 L378.0,756.0 L385.0,755.4 L392.0,755.6 L399.0,755.5 L406.0,755.5 L413.0,756.1 L420.0,755.5 L427.0,755.1 L434.0,755.3 L441.0,754.6 L448.0,754.0 L455.0,754.0 L462.0,754.0 L469.0,754.0 L476.0,754.0 L483.0,754.1 L490.0,754.3 L497.0,754.0 L504.0,754.2 L511.0,754.2 L518.0,754.0 L525.0,754.7 L532.0,754.3 L539.0,754.0 L546.0,754.0 L553.0,754.2 L560.0,754.8 L567.0,755.3 L574.0,755.1 L581.0,754.7 L588.0,754.0 L595.0,754.2 L602.0,754.3 L609.0,754.1 L616.0,754.3 L623.0,754.2 L630.0,754.9 L637.0,755.3 L644.0,754.9 L651.0,755.6 L658.0,754.8 L665.0,754.9 L672.0,754.7 L679.0,754.3 L686.0,754.0 L693.0,754.4 L700.0,754.0 L707.0,754.1 L714.0,754.8 L721.0,754.2 L728.0,754.0 L735.0,754.2 L742.0,754.2 L749.0,754.4 L756.0,754.9 L763.0,754.4 L770.0,754.1 L777.0,754.0 L784.0,754.0 L791.0,754.6 L798.0,755.1 L805.0,755.4 L812.0,754.6 L819.0,755.2 L826.0,755.6 L833.0,755.5 L840.0,755.9 L847.0,755.8 L854.0,755.4 L861.0,754.8 L868.0,754.3 L875.0,754.0 L882.0,754.0 L889.0,754.4 L896.0,754.7 L903.0,755.3 L910.0,755.6 L917.0,755.2 L924.0,755.3 L931.0,755.2 L938.0,755.7 L945.0,755.7 L952.0,755.3 L959.0,755.6 L966.0,756.3 L973.0,755.9 L980.0,756.5 L987.0,755.7 L994.0,755.3 L1001.0,754.9 L1008.0,755.3 L1015.0,756.0 L1022.0,756.4 L1029.0,756.1 L1036.0,756.7 L1043.0,756.4 L1050.0,756.0 L1057.0,756.7 L1064.0,756.9 L1071.0,757.2 L1078.0,757.5 L1085.0,758.2 L1092.0,758.2 L1099.0,758.7 L1106.0,759.0 L1113.0,759.6 L1120.0,759.5 L1127.0,759.9 L1134.0,760.0 L1141.0,759.7 L1148.0,759.2 L1155.0,759.4 L1162.0,758.7 L1169.0,759.4 L1176.0,758.8 L1183.0,758.1 L1190.0,757.4 L1197.0,758.1 L1204.0,757.9 L1211.0,757.3 L1218.0,756.5 L1225.0,755.8 L1232.0,756.1 L1239.0,756.3 L1246.0,756.6 L1253.0,757.0 L1260.0,756.3 L1267.0,756.5 L1274.0,756.3 L1281.0,756.8 L1288.0,757.3 L1295.0,757.9 L1302.0,757.2 L1309.0,757.8 L1316.0,758.5 L1323.0,759.2 L1330.0,758.5 L1337.0,758.1 L1344.0,757.4 L1351.0,756.7 L1358.0,757.3 L1365.0,757.8 L1372.0,758.0 L1379.0,758.5 L1386.0,758.7 L1393.0,758.4 L1400.0,757.7 L1407.0,757.1 L1414.0,757.5 L1421.0,757.0 L1428.0,756.7 L1435.0,756.6 L1442.0,755.8 L1449.0,755.4 L1456.0,755.1 L1463.0,755.4 L1470.0,755.2 L1477.0,754.9 L1484.0,755.7 L1491.0,755.7 L1498.0,756.3 L1505.0,756.4 L1512.0,755.7 L1519.0,755.6 L1526.0,755.5 L1533.0,755.9 L1540.0,755.6 L1547.0,756.0 L1554.0,756.0 L1561.0,755.6 L1568.0,756.2 L1575.0,755.5 L1582.0,756.0 L1589.0,755.5 L1596.0,754.7 L1603.0,754.2 L1610.0,754.6 L1617.0,755.4 L1624.0,754.6 L1631.0,754.6 L1638.0,754.6 L1645.0,755.1 L1652.0,754.6 L1659.0,754.5 L1666.0,754.3 L1673.0,754.8 L1680.0,754.4 L1687.0,755.2 L1694.0,754.8 L1701.0,754.4 L1708.0,754.7 L1715.0,754.7 L1722.0,754.0 L1729.0,754.3 L1736.0,754.0 L1743.0,754.5 L1750.0,754.8 L1757.0,755.2 L1764.0,755.4 L1771.0,755.2 L1778.0,755.1 L1785.0,754.9 L1792.0,755.5 L1799.0,754.8 L1806.0,755.5 L1813.0,754.7 L1820.0,754.2 L1827.0,754.0 L1834.0,754.6 L1841.0,754.6 L1848.0,754.5 L1855.0,755.1 L1862.0,754.6 L1869.0,754.6 L1876.0,754.6 L1883.0,755.0 L1890.0,755.4 L1897.0,755.7 L1904.0,755.4 L1911.0,755.2 L1918.0,754.6 L1925.0,755.2 L1932.0,755.4 L1939.0,755.8 L1946.0,755.3 L1953.0,755.2 L1960.0,755.6 L1967.0,755.7 L1974.0,755.1 L1981.0,755.1 L1988.0,755.7 L1995.0,755.3 L2002.0,754.8 L2009.0,754.5 L2016.0,754.8 L2023.0,755.3 L2030.0,754.8 L2037.0,754.2 L2044.0,754.0 L2051.0,754.0 L2058.0,754.0 L2065.0,754.0 L2072.0,754.0 L2079.0,754.0 L2086.0,754.8 L2093.0,755.1 L2100.0,754.5 L2107.0,755.2 L2114.0,754.6 L2121.0,754.4 L2128.0,755.2 L2135.0,755.7 L2142.0,756.0 L2149.0,755.9 L2156.0,755.4 L2163.0,755.7 L2170.0,755.0 L2177.0,754.6 L2184.0,754.4 L2191.0,754.0 L2198.0,754.0 L2205.0,754.5 L2212.0,754.8 L2219.0,754.8 L2226.0,755.0 L2233.0,754.9 L2240.0,754.4 L2247.0,754.5 L2254.0,754.4 L2261.0,754.8 L2268.0,755.4 L2275.0,755.3 L2282.0,755.4 L2289.0,755.8 L2296.0,755.7 L2303.0,755.3 L2310.0,755.6 L2317.0,756.2 L2324.0,756.7 L2331.0,757.0 L2338.0,757.5 L2345.0,757.8 L2352.0,758.1 L2359.0,758.0 L2366.0,757.7 L2373.0,757.9 L2380.0,757.2 L2387.0,757.1 L2394.0,757.6 L2401.0,757.9 L2408.0,758.1 L2415.0,757.7 L2422.0,757.6 L2429.0,757.5 L2436.0,757.7 L2443.0,757.6 L2450.0,757.8 L2457.0,758.5 L2464.0,758.0 L2471.0,758.3 L2478.0,758.7 L2485.0,758.5 L2492.0,758.5 L2499.0,759.3 L2506.0,758.5 L2513.0,758.6 L2520.0,758.1 L2527.0,758.5 L2534.0,759.2 L2541.0,759.3 L2548.0,758.6 L2555.0,758.7 L2562.0,758.8 L2569.0,759.2 L2576.0,759.2 L2583.0,759.4 L2590.0,759.9 L2597.0,760.0 L2604.0,759.8 L2611.0,760.5 L2618.0,760.1 L2625.0,760.4 L2632.0,760.2 L2639.0,760.6 L2646.0,760.0 L2653.0,760.8 L2660.0,760.6 L2667.0,759.8 L2674.0,759.5 L2681.0,759.3 L2688.0,758.5 L2695.0,758.4 L2702.0,758.3 L2709.0,758.6 L2716.0,758.4 L2723.0,758.0 L2730.0,757.5 L2737.0,757.9 L2744.0,758.6 L2751.0,758.7 L2758.0,758.2 L2765.0,758.7 L2772.0,758.5 L2779.0,758.1 L2786.0,757.5 L2793.0,757.9 L2800.0,758.4 L2807.0,758.6 L2814.0,758.6 L2821.0,758.7 L2828.0,758.3 L2835.0,759.0 L2842.0,758.8 L2849.0,759.0 L2856.0,759.5 L2863.0,760.0 L2870.0,759.9 L2877.0,759.6 L2884.0,759.7 L2891.0,759.1 L2898.0,759.6 L2905.0,759.4 L2912.0,760.0 L2919.0,759.6 L2926.0,759.4 L2933.0,759.0 L2940.0,758.9 L2947.0,758.4 L2954.0,757.6 L2961.0,757.9 L2968.0,757.6 L2975.0,757.2 L2982.0,756.9 L2989.0,756.8 L2996.0,756.7 L3003.0,756.9 L3010.0,757.2 L3017.0,757.0 L3024.0,757.6 L3031.0,758.2 L3038.0,757.5 L3045.0,758.0 L3052.0,758.7 L3059.0,759.1 L3066.0,758.6 L3070.0,758.6" fill="none" stroke="#9A28B5" stroke-width="3.4" stroke-linejoin="round" stroke-linecap="butt"/>
<path d="M371.0,750.3 L378.0,750.5 L385.0,750.0 L392.0,749.5 L399.0,749.9 L406.0,750.1 L413.0,749.8 L420.0,749.5 L427.0,749.1 L434.0,748.8 L441.0,749.1 L448.0,748.9 L455.0,748.7 L462.0,749.1 L469.0,749.4 L476.0,749.1 L483.0,749.5 L490.0,749.6 L497.0,749.8 L504.0,750.0 L511.0,750.4 L518.0,750.7 L525.0,751.0 L532.0,750.7 L539.0,750.9 L546.0,751.0 L553.0,751.2 L560.0,751.1 L567.0,751.3 L574.0,751.3 L581.0,751.1 L588.0,750.8 L595.0,750.4 L602.0,750.4 L609.0,750.0 L616.0,750.0 L623.0,749.6 L630.0,749.6 L637.0,749.6 L644.0,749.6 L651.0,750.0 L658.0,749.5 L665.0,749.8 L672.0,749.8 L679.0,749.9 L686.0,750.0 L693.0,750.4 L700.0,750.3 L707.0,750.2 L714.0,750.6 L721.0,750.2 L728.0,750.3 L735.0,750.5 L742.0,750.0 L749.0,750.1 L756.0,750.3 L763.0,750.7 L770.0,750.6 L777.0,751.0 L784.0,751.1 L791.0,751.0 L798.0,751.3 L805.0,750.8 L812.0,751.1 L819.0,751.2 L826.0,751.0 L833.0,751.3 L840.0,751.2 L847.0,751.1 L854.0,751.2 L861.0,751.3 L868.0,751.0 L875.0,750.9 L882.0,750.9 L889.0,750.9 L896.0,751.2 L903.0,751.0 L910.0,751.3 L917.0,751.2 L924.0,751.2 L931.0,751.0 L938.0,751.0 L945.0,751.3 L952.0,751.3 L959.0,751.3 L966.0,751.1 L973.0,750.9 L980.0,750.7 L987.0,750.8 L994.0,751.0 L1001.0,751.3 L1008.0,750.8 L1015.0,751.0 L1022.0,751.3 L1029.0,751.3 L1036.0,750.8 L1043.0,750.7 L1050.0,750.2 L1057.0,749.8 L1064.0,750.3 L1071.0,750.4 L1078.0,750.5 L1085.0,750.8 L1092.0,751.2 L1099.0,751.3 L1106.0,751.3 L1113.0,751.3 L1120.0,751.3 L1127.0,751.3 L1134.0,751.3 L1141.0,751.0 L1148.0,751.2 L1155.0,751.1 L1162.0,751.3 L1169.0,750.9 L1176.0,750.6 L1183.0,750.1 L1190.0,750.4 L1197.0,750.8 L1204.0,751.0 L1211.0,750.8 L1218.0,751.2 L1225.0,751.3 L1232.0,751.3 L1239.0,751.1 L1246.0,750.9 L1253.0,750.8 L1260.0,750.6 L1267.0,750.5 L1274.0,750.7 L1281.0,751.1 L1288.0,750.7 L1295.0,750.7 L1302.0,750.3 L1309.0,749.9 L1316.0,750.2 L1323.0,750.3 L1330.0,750.7 L1337.0,750.6 L1344.0,750.2 L1351.0,750.0 L1358.0,750.1 L1365.0,750.6 L1372.0,751.0 L1379.0,751.0 L1386.0,750.9 L1393.0,750.5 L1400.0,750.7 L1407.0,750.4 L1414.0,750.0 L1421.0,749.6 L1428.0,749.1 L1435.0,749.3 L1442.0,748.9 L1449.0,749.3 L1456.0,748.9 L1463.0,749.3 L1470.0,748.9 L1477.0,748.7 L1484.0,748.9 L1491.0,748.7 L1498.0,748.9 L1505.0,748.7 L1512.0,748.7 L1519.0,749.0 L1526.0,749.2 L1533.0,749.5 L1540.0,749.8 L1547.0,749.4 L1554.0,749.5 L1561.0,749.7 L1568.0,749.7 L1575.0,750.1 L1582.0,749.8 L1589.0,750.3 L1596.0,750.5 L1603.0,750.0 L1610.0,749.5 L1617.0,749.7 L1624.0,750.0 L1631.0,749.6 L1638.0,749.4 L1645.0,749.6 L1652.0,749.3 L1659.0,749.7 L1666.0,749.7 L1673.0,749.2 L1680.0,749.1 L1687.0,749.2 L1694.0,749.1 L1701.0,749.3 L1708.0,748.9 L1715.0,749.2 L1722.0,749.1 L1729.0,749.2 L1736.0,749.3 L1743.0,749.3 L1750.0,749.2 L1757.0,749.4 L1764.0,749.9 L1771.0,750.2 L1778.0,750.2 L1785.0,750.0 L1792.0,749.6 L1799.0,750.1 L1806.0,750.3 L1813.0,750.6 L1820.0,750.4 L1827.0,750.5 L1834.0,751.0 L1841.0,751.3 L1848.0,751.3 L1855.0,751.1 L1862.0,751.0 L1869.0,751.3 L1876.0,751.2 L1883.0,751.3 L1890.0,751.3 L1897.0,751.3 L1904.0,751.3 L1911.0,751.1 L1918.0,750.6 L1925.0,750.3 L1932.0,750.3 L1939.0,750.4 L1946.0,750.7 L1953.0,751.1 L1960.0,750.6 L1967.0,750.9 L1974.0,751.2 L1981.0,751.3 L1988.0,751.3 L1995.0,751.1 L2002.0,751.3 L2009.0,751.3 L2016.0,751.3 L2023.0,751.3 L2030.0,751.1 L2037.0,750.7 L2044.0,750.8 L2051.0,751.1 L2058.0,750.8 L2065.0,751.0 L2072.0,751.3 L2079.0,751.0 L2086.0,751.1 L2093.0,751.3 L2100.0,751.3 L2107.0,751.0 L2114.0,750.7 L2121.0,751.0 L2128.0,751.3 L2135.0,751.2 L2142.0,750.8 L2149.0,751.1 L2156.0,751.3 L2163.0,751.0 L2170.0,751.1 L2177.0,751.3 L2184.0,751.3 L2191.0,751.3 L2198.0,751.3 L2205.0,751.3 L2212.0,751.0 L2219.0,750.7 L2226.0,750.4 L2233.0,750.6 L2240.0,750.4 L2247.0,750.5 L2254.0,750.4 L2261.0,750.4 L2268.0,750.1 L2275.0,749.6 L2282.0,750.1 L2289.0,750.0 L2296.0,749.6 L2303.0,749.7 L2310.0,750.0 L2317.0,749.7 L2324.0,749.8 L2331.0,749.6 L2338.0,749.6 L2345.0,749.1 L2352.0,748.7 L2359.0,749.2 L2366.0,749.6 L2373.0,749.5 L2380.0,749.6 L2387.0,749.4 L2394.0,749.7 L2401.0,749.6 L2408.0,750.0 L2415.0,750.3 L2422.0,750.6 L2429.0,751.1 L2436.0,750.8 L2443.0,750.4 L2450.0,750.1 L2457.0,749.7 L2464.0,749.3 L2471.0,748.9 L2478.0,748.9 L2485.0,749.3 L2492.0,749.3 L2499.0,749.7 L2506.0,750.1 L2513.0,749.7 L2520.0,749.8 L2527.0,749.7 L2534.0,749.3 L2541.0,749.8 L2548.0,749.5 L2555.0,749.6 L2562.0,749.7 L2569.0,750.2 L2576.0,750.4 L2583.0,750.2 L2590.0,750.2 L2597.0,749.9 L2604.0,750.3 L2611.0,750.8 L2618.0,750.5 L2625.0,750.1 L2632.0,749.8 L2639.0,749.7 L2646.0,750.1 L2653.0,750.5 L2660.0,750.8 L2667.0,750.4 L2674.0,750.7 L2681.0,750.9 L2688.0,751.0 L2695.0,751.3 L2702.0,750.9 L2709.0,750.5 L2716.0,750.8 L2723.0,751.2 L2730.0,751.3 L2737.0,751.1 L2744.0,751.2 L2751.0,751.3 L2758.0,750.9 L2765.0,750.7 L2772.0,750.5 L2779.0,750.1 L2786.0,750.1 L2793.0,749.8 L2800.0,749.5 L2807.0,749.1 L2814.0,749.3 L2821.0,748.8 L2828.0,749.0 L2835.0,748.7 L2842.0,748.7 L2849.0,749.1 L2856.0,748.8 L2863.0,749.3 L2870.0,749.6 L2877.0,750.0 L2884.0,749.7 L2891.0,749.6 L2898.0,749.2 L2905.0,749.7 L2912.0,750.0 L2919.0,750.1 L2926.0,750.1 L2933.0,749.9 L2940.0,750.2 L2947.0,750.2 L2954.0,750.3 L2961.0,750.0 L2968.0,749.7 L2975.0,749.3 L2982.0,749.5 L2989.0,749.5 L2996.0,749.2 L3003.0,749.5 L3010.0,749.3 L3017.0,749.2 L3024.0,748.9 L3031.0,748.7 L3038.0,749.0 L3045.0,748.9 L3052.0,748.7 L3059.0,748.7 L3066.0,748.7 L3070.0,748.7" fill="none" stroke="#40E2EB" stroke-width="3.4" stroke-linejoin="round" stroke-linecap="butt"/>
<path d="M371.0,758.1 L378.0,757.5 L385.0,758.3 L392.0,757.6 L399.0,758.2 L406.0,758.5 L413.0,758.0 L420.0,758.0 L427.0,757.6 L434.0,757.3 L441.0,756.8 L448.0,756.6 L455.0,757.3 L462.0,758.1 L469.0,758.8 L476.0,758.2 L483.0,757.8 L490.0,758.5 L497.0,757.8 L504.0,758.1 L511.0,757.8 L518.0,758.6 L525.0,757.8 L532.0,758.3 L539.0,758.0 L546.0,757.5 L553.0,756.7 L560.0,757.2 L567.0,757.2 L574.0,756.7 L581.0,756.6 L588.0,757.3 L595.0,756.8 L602.0,756.9 L609.0,756.4 L616.0,755.9 L623.0,756.3 L630.0,756.6 L637.0,756.1 L644.0,755.5 L651.0,754.8 L658.0,755.0 L665.0,755.0 L672.0,754.6 L679.0,754.1 L686.0,754.3 L693.0,754.7 L700.0,755.2 L707.0,755.3 L714.0,754.8 L721.0,754.1 L728.0,754.5 L735.0,754.3 L742.0,754.7 L749.0,754.0 L756.0,754.5 L763.0,754.2 L770.0,754.8 L777.0,755.4 L784.0,755.4 L791.0,754.6 L798.0,755.2 L805.0,755.2 L812.0,755.8 L819.0,755.4 L826.0,754.9 L833.0,755.4 L840.0,755.2 L847.0,754.7 L854.0,754.5 L861.0,754.6 L868.0,754.0 L875.0,754.0 L882.0,754.0 L889.0,754.0 L896.0,754.0 L903.0,754.3 L910.0,754.8 L917.0,755.4 L924.0,755.1 L931.0,755.5 L938.0,755.3 L945.0,755.7 L952.0,755.0 L959.0,755.6 L966.0,756.3 L973.0,756.3 L980.0,756.3 L987.0,756.4 L994.0,756.4 L1001.0,755.7 L1008.0,756.4 L1015.0,756.0 L1022.0,755.5 L1029.0,754.8 L1036.0,754.4 L1043.0,754.9 L1050.0,754.2 L1057.0,754.0 L1064.0,754.3 L1071.0,754.0 L1078.0,754.0 L1085.0,754.2 L1092.0,754.3 L1099.0,754.3 L1106.0,754.6 L1113.0,754.0 L1120.0,754.6 L1127.0,754.9 L1134.0,754.2 L1141.0,754.0 L1148.0,754.0 L1155.0,754.0 L1162.0,754.0 L1169.0,754.0 L1176.0,754.0 L1183.0,754.0 L1190.0,754.1 L1197.0,754.7 L1204.0,754.2 L1211.0,754.3 L1218.0,754.7 L1225.0,754.1 L1232.0,754.7 L1239.0,755.4 L1246.0,755.2 L1253.0,755.1 L1260.0,755.6 L1267.0,755.6 L1274.0,755.5 L1281.0,756.2 L1288.0,756.6 L1295.0,756.4 L1302.0,755.9 L1309.0,755.7 L1316.0,755.6 L1323.0,756.3 L1330.0,756.8 L1337.0,757.5 L1344.0,758.0 L1351.0,758.6 L1358.0,757.8 L1365.0,757.9 L1372.0,758.6 L1379.0,759.3 L1386.0,758.9 L1393.0,758.8 L1400.0,759.0 L1407.0,758.8 L1414.0,758.8 L1421.0,758.1 L1428.0,758.0 L1435.0,758.0 L1442.0,757.3 L1449.0,756.7 L1456.0,757.4 L1463.0,757.9 L1470.0,758.6 L1477.0,758.8 L1484.0,759.3 L1491.0,759.9 L1498.0,760.5 L1505.0,759.8 L1512.0,760.0 L1519.0,759.6 L1526.0,759.9 L1533.0,759.5 L1540.0,759.6 L1547.0,760.3 L1554.0,760.5 L1561.0,760.1 L1568.0,760.1 L1575.0,760.0 L1582.0,760.7 L1589.0,760.4 L1596.0,760.1 L1603.0,760.3 L1610.0,759.7 L1617.0,759.9 L1624.0,760.6 L1631.0,760.6 L1638.0,760.2 L1645.0,760.2 L1652.0,760.2 L1659.0,759.7 L1666.0,759.1 L1673.0,758.5 L1680.0,758.2 L1687.0,758.0 L1694.0,757.7 L1701.0,757.3 L1708.0,756.6 L1715.0,756.7 L1722.0,757.2 L1729.0,757.4 L1736.0,757.5 L1743.0,757.7 L1750.0,757.3 L1757.0,757.6 L1764.0,757.5 L1771.0,757.6 L1778.0,757.8 L1785.0,757.7 L1792.0,757.4 L1799.0,757.0 L1806.0,756.6 L1813.0,756.6 L1820.0,756.4 L1827.0,756.6 L1834.0,755.8 L1841.0,755.5 L1848.0,756.1 L1855.0,755.7 L1862.0,755.8 L1869.0,755.8 L1876.0,755.4 L1883.0,756.2 L1890.0,755.9 L1897.0,756.3 L1904.0,755.8 L1911.0,755.1 L1918.0,755.7 L1925.0,755.6 L1932.0,754.9 L1939.0,754.7 L1946.0,754.6 L1953.0,755.0 L1960.0,754.4 L1967.0,754.0 L1974.0,754.7 L1981.0,755.1 L1988.0,754.6 L1995.0,754.3 L2002.0,754.1 L2009.0,754.3 L2016.0,754.5 L2023.0,755.1 L2030.0,755.6 L2037.0,755.6 L2044.0,756.0 L2051.0,756.4 L2058.0,756.8 L2065.0,756.8 L2072.0,757.2 L2079.0,757.6 L2086.0,758.2 L2093.0,757.6 L2100.0,758.2 L2107.0,757.4 L2114.0,757.9 L2121.0,758.0 L2128.0,758.0 L2135.0,758.7 L2142.0,758.9 L2149.0,758.7 L2156.0,759.2 L2163.0,759.8 L2170.0,759.9 L2177.0,759.8 L2184.0,759.7 L2191.0,759.6 L2198.0,760.0 L2205.0,759.6 L2212.0,759.5 L2219.0,759.5 L2226.0,759.4 L2233.0,759.1 L2240.0,759.5 L2247.0,760.1 L2254.0,760.1 L2261.0,760.0 L2268.0,759.5 L2275.0,759.2 L2282.0,758.6 L2289.0,758.7 L2296.0,758.9 L2303.0,758.2 L2310.0,758.9 L2317.0,758.6 L2324.0,759.2 L2331.0,759.7 L2338.0,760.4 L2345.0,760.0 L2352.0,759.8 L2359.0,760.5 L2366.0,759.7 L2373.0,759.0 L2380.0,759.1 L2387.0,759.1 L2394.0,759.8 L2401.0,760.2 L2408.0,760.3 L2415.0,761.0 L2422.0,761.0 L2429.0,761.0 L2436.0,761.0 L2443.0,760.8 L2450.0,760.6 L2457.0,760.7 L2464.0,760.5 L2471.0,761.0 L2478.0,761.0 L2485.0,761.0 L2492.0,760.4 L2499.0,760.2 L2506.0,760.0 L2513.0,760.1 L2520.0,760.2 L2527.0,760.8 L2534.0,761.0 L2541.0,761.0 L2548.0,760.9 L2555.0,761.0 L2562.0,761.0 L2569.0,760.7 L2576.0,760.8 L2583.0,761.0 L2590.0,760.5 L2597.0,760.2 L2604.0,760.9 L2611.0,761.0 L2618.0,761.0 L2625.0,760.4 L2632.0,761.0 L2639.0,761.0 L2646.0,761.0 L2653.0,761.0 L2660.0,761.0 L2667.0,760.9 L2674.0,760.3 L2681.0,760.0 L2688.0,760.0 L2695.0,760.0 L2702.0,759.5 L2709.0,759.0 L2716.0,759.2 L2723.0,759.4 L2730.0,759.1 L2737.0,759.9 L2744.0,760.2 L2751.0,759.4 L2758.0,759.3 L2765.0,759.7 L2772.0,759.4 L2779.0,759.7 L2786.0,758.9 L2793.0,758.6 L2800.0,759.2 L2807.0,759.3 L2814.0,759.6 L2821.0,759.1 L2828.0,759.1 L2835.0,759.2 L2842.0,758.8 L2849.0,759.0 L2856.0,759.1 L2863.0,759.9 L2870.0,760.0 L2877.0,759.9 L2884.0,759.3 L2891.0,758.7 L2898.0,759.1 L2905.0,758.5 L2912.0,757.9 L2919.0,757.3 L2926.0,757.4 L2933.0,757.9 L2940.0,758.1 L2947.0,758.6 L2954.0,757.9 L2961.0,757.1 L2968.0,757.5 L2975.0,757.2 L2982.0,757.6 L2989.0,757.3 L2996.0,756.8 L3003.0,756.4 L3010.0,755.8 L3017.0,756.4 L3024.0,756.6 L3031.0,756.3 L3038.0,756.2 L3045.0,756.1 L3052.0,755.3 L3059.0,756.0 L3066.0,756.1 L3070.0,756.1" fill="none" stroke="#E636E6" stroke-width="3.4" stroke-linejoin="round" stroke-linecap="butt"/>
</svg>
<div class="yl" style="top:468px">2,000</div>
<div class="yl" style="top:568px">625</div>
<div class="yl" style="top:708px">125</div>
<div class="yl" style="top:846px">25</div>
<div class="yl" style="top:986px">5</div>
<div class="yl" style="top:1126px">1</div>
<div class="xl" style="left:321.6px">08:10</div>
<div class="xl" style="left:547.2px">08:15</div>
<div class="xl" style="left:772.8px">08:20</div>
<div class="xl" style="left:998.4px">08:25</div>
<div class="xl" style="left:1224.0px">08:30</div>
<div class="xl" style="left:1449.6px">08:35</div>
<div class="xl" style="left:1675.2px">08:40</div>
<div class="xl" style="left:1900.8px">08:45</div>
<div class="xl" style="left:2126.4px">08:50</div>
<div class="xl" style="left:2352.0px">08:55</div>
<div class="xl" style="font-weight:bold;left:2577.6px">09:00</div>
<div class="xl" style="left:2803.2px">09:05</div>
<div class="lg" style="left:417px;top:1486px"><span class="cb" style="background:#00AEEF"><svg width="50" height="50" viewBox="0 0 50 50"><path d="M10 26.5 L20.5 37 L40.5 12" fill="none" stroke="#35383D" stroke-width="6.8" stroke-linecap="butt" stroke-linejoin="miter"/></svg></span><span class="lt" style="letter-spacing:-0.6px;margin-right:0.6px">RPM</span></div>
<div class="lg" style="left:1275px;top:1486px"><span class="cb" style="background:#DC1648"><svg width="50" height="50" viewBox="0 0 50 50"><path d="M10 26.5 L20.5 37 L40.5 12" fill="none" stroke="#FFFFFF" stroke-width="6.8" stroke-linecap="butt" stroke-linejoin="miter"/></svg></span><span class="lt" style="letter-spacing:3.5px;margin-right:-3.5px">Temp</span></div>
<div class="lg" style="left:2135px;top:1486px"><span class="cb" style="background:#30A04E"><svg width="50" height="50" viewBox="0 0 50 50"><path d="M10 26.5 L20.5 37 L40.5 12" fill="none" stroke="#35383D" stroke-width="6.8" stroke-linecap="butt" stroke-linejoin="miter"/></svg></span><span class="lt" style="letter-spacing:-0.2px;margin-right:0.2px">Oil Pressure</span></div>
<div class="lg" style="left:417px;top:1599px"><span class="cb" style="background:#FFDD17"><svg width="50" height="50" viewBox="0 0 50 50"><path d="M10 26.5 L20.5 37 L40.5 12" fill="none" stroke="#35383D" stroke-width="6.8" stroke-linecap="butt" stroke-linejoin="miter"/></svg></span><span class="lt" style="letter-spacing:0px;margin-right:0px">Gas Pressure</span></div>
<div class="lg" style="left:1275px;top:1599px"><span class="cb" style="background:#F0832E"><svg width="50" height="50" viewBox="0 0 50 50"><path d="M10 26.5 L20.5 37 L40.5 12" fill="none" stroke="#35383D" stroke-width="6.8" stroke-linecap="butt" stroke-linejoin="miter"/></svg></span><span class="lt" style="letter-spacing:2.44px;margin-right:-2.44px">Battery Voltage</span></div>
<div class="lg" style="left:2135px;top:1599px"><span class="cb" style="background:#8F20B4"><svg width="50" height="50" viewBox="0 0 50 50"><path d="M10 26.5 L20.5 37 L40.5 12" fill="none" stroke="#FFFFFF" stroke-width="6.8" stroke-linecap="butt" stroke-linejoin="miter"/></svg></span><span class="lt" style="letter-spacing:1.34px;margin-right:-1.34px">Phase 1 Amps</span></div>
<div class="lg" style="left:847px;top:1712px"><span class="cb" style="background:#45E8EF"><svg width="50" height="50" viewBox="0 0 50 50"><path d="M10 26.5 L20.5 37 L40.5 12" fill="none" stroke="#35383D" stroke-width="6.8" stroke-linecap="butt" stroke-linejoin="miter"/></svg></span><span class="lt" style="letter-spacing:1.49px;margin-right:-1.49px">Phase 2 Amps</span></div>
<div class="lg" style="left:1706px;top:1712px"><span class="cb" style="background:#E535E8"><svg width="50" height="50" viewBox="0 0 50 50"><path d="M10 26.5 L20.5 37 L40.5 12" fill="none" stroke="#35383D" stroke-width="6.8" stroke-linecap="butt" stroke-linejoin="miter"/></svg></span><span class="lt" style="letter-spacing:1.52px;margin-right:-1.52px">Phase 3 Amps</span></div>
<div class="side">
<div class="cir" style="top:129.9px;background:#212429"><svg width="161" height="161" viewBox="-80.5 -80.5 161 161">
<path d="M-43.5,-24.5 Q-24,-40 -9,-40.5" fill="none" stroke="#3AA9EA" stroke-width="5.6" stroke-linecap="round"/>
<path d="M43.5,-24.5 Q24,-40 9,-40.5" fill="none" stroke="#3AA9EA" stroke-width="5.6" stroke-linecap="round"/>
<path d="M0,-56.5 L12.3,-41.5 L0,-26.5 L-12.3,-41.5 Z" fill="#3AA9EA"/>
<path d="M-31,1 Q-19,-9 -9,-10" fill="none" stroke="#2F9EDD" stroke-width="5.6" stroke-linecap="round"/>
<path d="M31,1 Q19,-9 9,-10" fill="none" stroke="#2F9EDD" stroke-width="5.6" stroke-linecap="round"/>
<path d="M0,-23.8 L12.3,-9.4 L0,5 L-12.3,-9.4 Z" fill="#2F9EDD"/>
<clipPath id="cc"><rect x="-30" y="24.5" width="60" height="40"/></clipPath>
<circle cx="0" cy="33.8" r="18.8" fill="#DFE2E6" clip-path="url(#cc)"/>
<path d="M0,4.7 L16.8,22.5 L0,40.3 L-16.8,22.5 Z" fill="#212429"/>
<path d="M0,7.7 L14,22.5 L0,37.3 L-14,22.5 Z" fill="#1689CB"/>
</svg></div>
<div class="cir" style="top:378.2px;background:#212429"><svg width="161" height="161" viewBox="-80.5 -80.5 161 161">
<rect x="-48.3" y="-47.5" width="96.6" height="96.6" rx="8" fill="none" stroke="#DFE2E6" stroke-width="4"/>
<circle cx="0" cy="0.5" r="39" fill="none" stroke="#DFE2E6" stroke-width="4"/>
<g transform="translate(0,0.5)"><path transform="rotate(0)" d="M1,-6 L1.5,-34 C12,-35 20.5,-28 19.8,-20 C19.2,-13 11,-8.5 5,-5.5 Z" fill="none" stroke="#DFE2E6" stroke-width="3.6" stroke-linejoin="round"/><path transform="rotate(60)" d="M1,-6 L1.5,-34 C12,-35 20.5,-28 19.8,-20 C19.2,-13 11,-8.5 5,-5.5 Z" fill="none" stroke="#DFE2E6" stroke-width="3.6" stroke-linejoin="round"/><path transform="rotate(120)" d="M1,-6 L1.5,-34 C12,-35 20.5,-28 19.8,-20 C19.2,-13 11,-8.5 5,-5.5 Z" fill="none" stroke="#DFE2E6" stroke-width="3.6" stroke-linejoin="round"/><path transform="rotate(180)" d="M1,-6 L1.5,-34 C12,-35 20.5,-28 19.8,-20 C19.2,-13 11,-8.5 5,-5.5 Z" fill="none" stroke="#DFE2E6" stroke-width="3.6" stroke-linejoin="round"/><path transform="rotate(240)" d="M1,-6 L1.5,-34 C12,-35 20.5,-28 19.8,-20 C19.2,-13 11,-8.5 5,-5.5 Z" fill="none" stroke="#DFE2E6" stroke-width="3.6" stroke-linejoin="round"/><path transform="rotate(300)" d="M1,-6 L1.5,-34 C12,-35 20.5,-28 19.8,-20 C19.2,-13 11,-8.5 5,-5.5 Z" fill="none" stroke="#DFE2E6" stroke-width="3.6" stroke-linejoin="round"/>
<circle r="6.5" fill="#DFE2E6"/>
<circle r="2.7" fill="#212429"/></g>
</svg></div>
<div class="cir" style="top:626.6px;background:#212429"><svg width="161" height="161" viewBox="-80.5 -80.5 161 161"><path d="M-3,-39 Q0,-44 4,-40 Q5,-39 5,-36 L5,-14 L19,-14 Q27,-13 24,-5 L4,39 Q0,44 -4,40 Q-5,39 -5,36 L-5,13 L-19,13 Q-27,12 -24,4 Z" fill="none" stroke="#DFE2E6" stroke-width="4.5" stroke-linejoin="round"/></svg></div>
<div class="cir" style="top:874.9px;background:#212429"><svg width="161" height="161" viewBox="-80.5 -80.5 161 161">
<rect x="-46.6" y="-45.3" width="93.6" height="94" rx="9" fill="none" stroke="#DFE2E6" stroke-width="4.2"/>
<circle cx="0" cy="1" r="35.5" fill="none" stroke="#DFE2E6" stroke-width="4.2"/>
<circle cx="0" cy="1" r="11.3" fill="none" stroke="#DFE2E6" stroke-width="4.2"/>
<path d="M-37,-35.5 L-9,-7.5 M37,-35.5 L9,-7.5 M-37,37.5 L-9,9.5 M37,37.5 L9,9.5" stroke="#DFE2E6" stroke-width="4.2"/>
</svg></div>
<div class="cir" style="top:1123.3px;background:#212429"><svg width="161" height="161" viewBox="-80.5 -80.5 161 161"><g transform="translate(0,2)">
<rect x="-44.8" y="-13.5" width="7.6" height="29.5" rx="3" fill="#DFE2E6"/>
<rect x="-38" y="-1.5" width="7" height="8" fill="#DFE2E6"/>
<path d="M-31.5,-11 L-24.6,-11 L-18.6,-17.3 L12.4,-17.3 L23.5,-8 L23.5,-0.5 L31.5,-0.5 L31.5,-11 L37,-11 Q48,6 37.5,24 L31.5,24 L31.5,14 L25.5,14 L25.5,28.3 L-7.6,28.3 L-18,18.6 L-31.5,18.6 Z" fill="none" stroke="#DFE2E6" stroke-width="3.8" stroke-linejoin="round"/>
<rect x="-17.7" y="-29.5" width="26.8" height="7" rx="3.5" fill="#DFE2E6"/>
<rect x="-6.5" y="-23" width="9" height="6" fill="#DFE2E6"/><rect x="-3.3" y="-22.5" width="2.2" height="4" fill="#212429"/>
</g></svg></div>
<div class="cir" style="top:1371.6px;background:#DFE1E5"><svg width="161" height="161" viewBox="-80.5 -80.5 161 161">
<rect x="-42.5" y="-43.5" width="85" height="86" rx="10" fill="none" stroke="#25272C" stroke-width="4.3"/>
<path d="M-24,22.5 L-10,3 Q-6,-3 -2,1 L1,5 Q5,10 9,5 L23.5,-14.5" fill="none" stroke="#25272C" stroke-width="4.3" stroke-linecap="round" stroke-linejoin="round"/>
</svg></div>
<div class="cir" style="top:1619.9px;background:#212429"><svg width="161" height="161" viewBox="-80.5 -80.5 161 161">
<path d="M29,-0.7 L38,17 Q40,23.5 34,23.5 L-34,23.5 Q-40,23.5 -38,17 L-28,-1 Q-26,-8 -26,-18 Q-24,-43 0,-43.5 Q7,-43.5 12,-40" fill="none" stroke="#DFE2E6" stroke-width="4" stroke-linecap="round" stroke-linejoin="round"/>
<path d="M-20,25.5 A20,17 0 0 0 20,25.5" fill="none" stroke="#DFE2E6" stroke-width="4"/>
<circle cx="28.3" cy="-24.2" r="16.6" fill="#DFE2E6"/>
</svg></div>
<div class="cir" style="top:1868.3px;background:#212429"><svg width="161" height="161" viewBox="-80.5 -80.5 161 161">
<circle r="43" fill="none" stroke="#DFE2E6" stroke-width="4"/>
<path d="M-14.5,-7.5 Q-14.5,-24 0.5,-24 Q15.5,-24 15.5,-10 Q15.5,-3 6,3 Q0,7 0,13 L0,19" fill="none" stroke="#DFE2E6" stroke-width="4" stroke-linecap="round"/>
<circle cx="0" cy="28.3" r="5" fill="#DFE2E6"/>
</svg></div>
</div>
</body></html>
